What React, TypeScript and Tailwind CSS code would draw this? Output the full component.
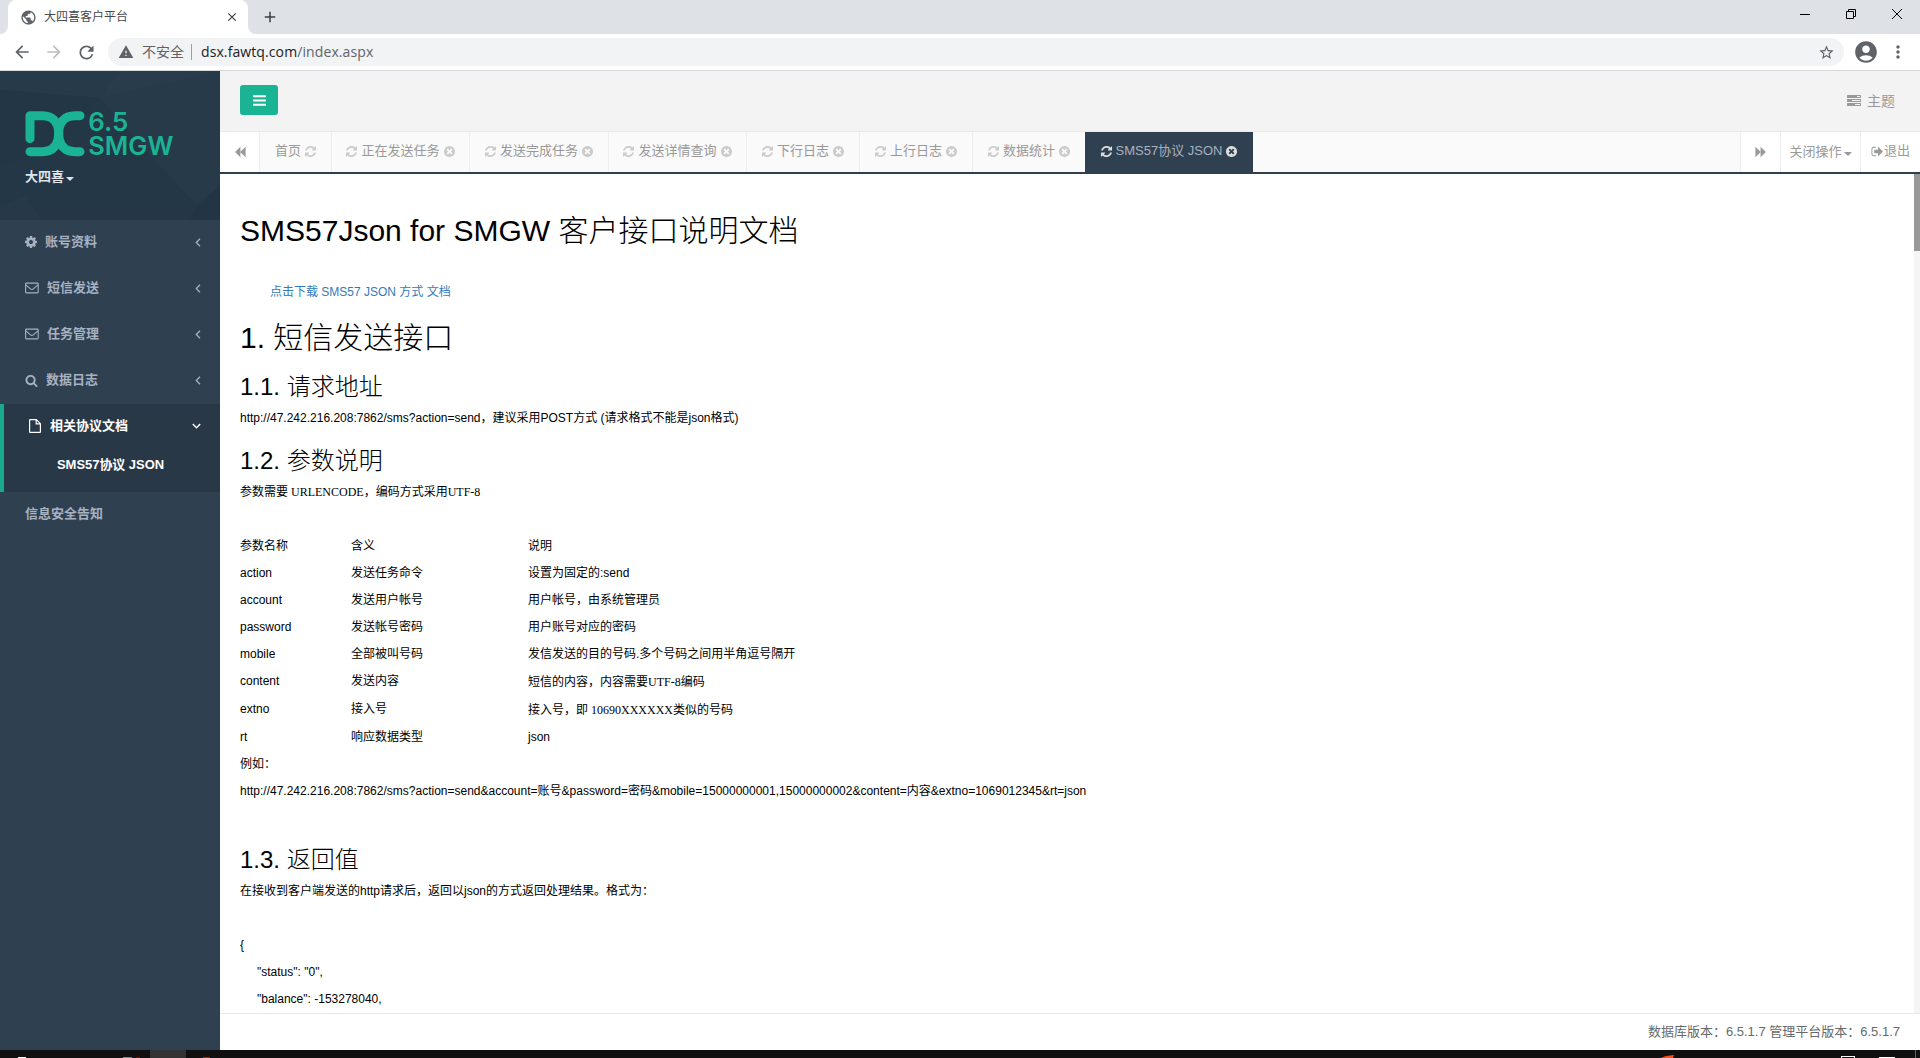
import React from "react";
import { MdPublic, MdStarBorder, MdAccountCircle, MdWarning, MdArrowBack, MdArrowForward, MdRefresh, MdMoreVert, MdClose, MdAdd } from "react-icons/md";

const UI = "font-['Open_Sans','Noto_Sans_CJK_SC',sans-serif]";
const SANS = "font-['Liberation_Sans','Noto_Sans_CJK_SC',sans-serif]";

const PATHS = {
  bars: "M1664 1344v128q0 26-19 45t-45 19h-1408q-26 0-45-19t-19-45v-128q0-26 19-45t45-19h1408q26 0 45 19t19 45zm0-512v128q0 26-19 45t-45 19h-1408q-26 0-45-19t-19-45v-128q0-26 19-45t45-19h1408q26 0 45 19t19 45zm0-512v128q0 26-19 45t-45 19h-1408q-26 0-45-19t-19-45v-128q0-26 19-45t45-19h1408q26 0 45 19t19 45z",
  refresh: "M1639 1056q0 5-1 7-64 268-268 434.5t-478 166.5q-146 0-282.5-55t-243.5-157l-129 129q-19 19-45 19t-45-19-19-45v-448q0-26 19-45t45-19h448q26 0 45 19t19 45-19 45l-137 137q71 66 161 102t187 36q134 0 250-65t186-179q11-17 53-117 8-23 30-23h192q13 0 22.5 9.5t9.5 22.5zm25-800v448q0 26-19 45t-45 19h-448q-26 0-45-19t-19-45 19-45l138-138q-148-137-349-137-134 0-250 65t-186 179q-11 17-53 117-8 23-30 23h-199q-13 0-22.5-9.5t-9.5-22.5v-7q65-268 270-434.5t480-166.5q146 0 284 55.5t245 156.5l130-129q19-19 45-19t45 19 19 45z",
  timesCircle: "M1277 1122q0-26-19-45l-181-181 181-181q19-19 19-45 0-27-19-46l-90-90q-19-19-46-19-26 0-45 19l-181 181-181-181q-19-19-45-19-27 0-46 19l-90 90q-19 19-19 46 0 26 19 45l181 181-181 181q-19 19-19 45 0 27 19 46l90 90q19 19 46 19 26 0 45-19l181-181 181 181q19 19 45 19 27 0 46-19l90-90q19-19 19-46zm387-226q0 209-103 385.5t-279.5 279.5-385.5 103-385.5-103-279.5-279.5-103-385.5 103-385.5 279.5-279.5 385.5-103 385.5 103 279.5 279.5 103 385.5z",
  backward: "M1683 141q19-19 32-13t13 32v1472q0 26-13 32t-32-13l-710-710q-9-9-13-19v710q0 26-13 32t-32-13l-710-710q-19-19-19-45t19-45l710-710q19-19 32-13t13 32v710q4-10 13-19z",
  signOut: "M704 1440q0 4 1 20t.5 26.5-3 23.5-10 19.5-20.5 6.5h-320q-119 0-203.5-84.5t-84.5-203.5v-704q0-119 84.5-203.5t203.5-84.5h320q13 0 22.5 9.5t9.5 22.5q0 4 1 20t.5 26.5-3 23.5-10 19.5-20.5 6.5h-320q-66 0-113 47t-47 113v704q0 66 47 113t113 47h312l11.5 1 11.5 3 8 5.5 7 9 2 13.5zm928-544q0 26-19 45l-544 544q-19 19-45 19t-45-19-19-45v-288h-448q-26 0-45-19t-19-45v-384q0-26 19-45t45-19h448v-288q0-26 19-45t45-19 45 19l544 544q19 19 19 45z",
  tasks: "M1024 1408h640v-128h-640v128zm-384-512h1024v-128h-1024v128zm640-512h384v-128h-384v128zm512 832v256q0 26-19 45t-45 19h-1664q-26 0-45-19t-19-45v-256q0-26 19-45t45-19h1664q26 0 45 19t19 45zm0-512v256q0 26-19 45t-45 19h-1664q-26 0-45-19t-19-45v-256q0-26 19-45t45-19h1664q26 0 45 19t19 45zm0-512v256q0 26-19 45t-45 19h-1664q-26 0-45-19t-19-45v-256q0-26 19-45t45-19h1664q26 0 45 19t19 45z",
  cog: "M1152 896q0-106-75-181t-181-75-181 75-75 181 75 181 181 75 181-75 75-181zm512-109v222q0 12-8 23t-20 13l-185 28q-19 54-39 91 35 50 107 138 10 12 10 25t-9 23q-27 37-99 108t-94 71q-12 0-26-9l-138-108q-44 23-91 38-16 136-29 186-7 28-36 28h-222q-14 0-24.5-8.5t-11.5-21.5l-28-184q-49-16-90-37l-141 107q-10 9-25 9-14 0-25-11-126-114-165-168-7-10-7-23 0-12 8-23 15-21 51-66.5t54-70.5q-27-50-41-99l-183-27q-13-2-21-12.5t-8-23.5v-222q0-12 8-23t19-13l186-28q14-46 39-92-40-57-107-138-10-12-10-24 0-10 9-23 26-36 98.5-107.5t94.5-71.5q13 0 26 10l138 107q44-23 91-38 16-136 29-186 7-28 36-28h222q14 0 24.5 8.5t11.5 21.5l28 184q49 16 90 37l142-107q9-9 24-9 13 0 25 10 129 119 165 170 7 8 7 22 0 12-8 23-15 21-51 66.5t-54 70.5q26 50 41 98l183 28q13 2 21 12.5t8 23.5z",
  search: "M1216 832q0-185-131.5-316.5t-316.5-131.5-316.5 131.5-131.5 316.5 131.5 316.5 316.5 131.5 316.5-131.5 131.5-316.5zm512 832q0 52-38 90t-90 38q-54 0-90-38l-343-342q-179 124-399 124-143 0-273.5-55.5t-225-150-150-225-55.5-273.5 55.5-273.5 150-225 225-150 273.5-55.5 273.5 55.5 225 150 150 225 55.5 273.5q0 220-124 399l343 343q37 37 37 90z",
};

function Icon({ name, className }: { name: keyof typeof PATHS; className: string }) {
  return (
    <svg viewBox="0 0 1792 1792" className={"shrink-0 fill-current " + className}>
      <path d={PATHS[name]} />
    </svg>
  );
}

function Envelope() {
  return (
    <svg width="14" height="12" viewBox="0 0 14 12" fill="none" stroke="currentColor" strokeWidth="1.1" className="shrink-0">
      <rect x="0.6" y="1.1" width="12.6" height="9.8" rx="0.8" />
      <path d="M0.8 2.8 L5.5 6.9 Q6.9 8 8.3 6.9 L13 2.8" />
    </svg>
  );
}

function FileIcon() {
  return (
    <svg width="12" height="14" viewBox="0 0 12 14" fill="none" stroke="currentColor" strokeWidth="1.2" className="shrink-0">
      <path d="M0.6 1.1 Q0.6 0.6 1.1 0.6 H7.3 L11.4 4.7 V12.9 Q11.4 13.4 10.9 13.4 H1.1 Q0.6 13.4 0.6 12.9 Z M7.2 0.6 V4.9 H11.4" />
    </svg>
  );
}

function Caret({ className = "" }: { className?: string }) {
  return <span className={"inline-block border-x-4 border-t-4 border-x-transparent border-t-current " + className} />;
}

function BrowserChrome() {
  return (
    <header className={"shrink-0 " + UI}>
      <div className="flex h-[34px] bg-[#dee1e6]">
        <div className="w-2 bg-white">
          <div className="h-full rounded-br-lg bg-[#dee1e6]" />
        </div>
        <div className="flex w-[240px] items-center rounded-t-lg bg-white pr-[9px] pl-3">
          <MdPublic className="size-[17px] text-[#5f6368]" />
          <span className="ml-[7px] flex-1 text-xs text-[#45494d]">大四喜客户平台</span>
          <MdClose className="size-[14px] text-[#3c4043]" />
        </div>
        <div className="w-2 bg-white">
          <div className="h-full rounded-bl-lg bg-[#dee1e6]" />
        </div>
        <MdAdd className="mt-[8px] ml-[5px] size-[18px] text-[#3c4043]" />
        <svg viewBox="0 0 120 20" className="mt-1 mr-[16px] ml-auto h-5 w-[120px]" fill="none" stroke="#000" strokeWidth="1">
          <path d="M16 10.5 H26" />
          <path d="M62.5 7.5 h7 v7 h-7 z M64.5 7.5 v-2 h7 v7 h-2" />
          <path d="M108 5 l10 10 M118 5 l-10 10" />
        </svg>
      </div>
      <div className="flex h-9 items-center bg-white text-[#5f6368]">
        <MdArrowBack className="ml-3 size-5" />
        <MdArrowForward className="ml-3 size-5 text-[#bbbdbf]" />
        <MdRefresh className="ml-3 size-[21px]" />
        <div className="ml-[11px] flex h-7 flex-1 items-center rounded-full bg-[#f1f3f4] pr-[9px] pl-[10px] text-sm">
          <MdWarning className="size-4" />
          <span className="ml-2 w-[43px] text-[14px] whitespace-nowrap">不安全</span>
          <span className="ml-[6px] h-4 w-px bg-[#9aa0a6]" />
          <span className="ml-[9px] tracking-[0.1px]">
            <span className="text-[#202124]">dsx.fawtq.com</span>/index.aspx
          </span>
          <MdStarBorder className="ml-auto size-[17px]" />
        </div>
        <MdAccountCircle className="ml-[9px] size-[26px]" />
        <MdMoreVert className="mr-[12px] ml-[9px] size-5" />
      </div>
      <div className="h-px bg-[#d6d8db]" />
    </header>
  );
}

function Logo() {
  return (
    <svg width="150" height="50" viewBox="0 0 450 150" overflow="visible" className="block text-[#1ab394]">
      <g fill="none" stroke="currentColor" strokeWidth="27" strokeLinecap="round" strokeLinejoin="round">
        <path d="M15 92 V23 H52 C84 23 101 44 101 76 C101 110 84 131 52 131 H15" />
        <path d="M165 23 H150 C118 23 101 44 101 76 C101 110 118 131 150 131 H165" />
      </g>
      <g fill="currentColor" className="font-['Inter',sans-serif]" fontWeight="600" fontSize="75">
        <text x="190" y="68" textLength="120" lengthAdjust="spacingAndGlyphs">6.5</text>
        <text x="190" y="142" textLength="255" lengthAdjust="spacingAndGlyphs">SMGW</text>
      </g>
    </svg>
  );
}

function ProfileBackground() {
  return (
    <svg viewBox="0 0 220 149" className="absolute inset-0 h-full w-full" preserveAspectRatio="none">
      <rect width="220" height="149" fill="#243747" />
      <path d="M0 0 H120 L100 27 L0 19 Z" fill="#273a4a" />
      <path d="M120 0 H220 V115 L197 134 L155 90 L100 27 Z" fill="#263a4a" />
      <path d="M120 0 L220 0 L100 27 Z" fill="#283c4b" />
      <path d="M0 19 L100 27 L60 75 L0 95 Z" fill="#233646" />
      <path d="M197 134 L220 115 V149 H190 Z" fill="#223544" />
      <path d="M0 135 L25 125 L42 149 H0 Z" fill="#253948" />
    </svg>
  );
}

const MENU = [
  { label: "账号资料", icon: <Icon name="cog" className="mr-[7px] -ml-px size-[14px]" /> },
  { label: "短信发送", icon: <span className="mr-2"><Envelope /></span> },
  { label: "任务管理", icon: <span className="mr-2"><Envelope /></span> },
  { label: "数据日志", icon: <Icon name="search" className="mr-2 size-[13px]" /> },
];

function Sidebar() {
  return (
    <nav className={"w-[220px] shrink-0 bg-[#2f4050] text-[13px] font-semibold text-[#a7b1c2] " + SANS}>
      <div className="relative h-[149px]">
        <ProfileBackground />
        <div className="relative pt-[37px] pl-[25px]">
          <Logo />
          <div className="mt-[7px] flex h-6 items-center text-[#dfe4ed]">
            大四喜
            <Caret className="mt-[3px] ml-[2px]" />
          </div>
        </div>
      </div>
      {MENU.map((m) => (
        <div key={m.label} className="flex h-[46px] items-center pr-[19px] pb-[2px] pl-[25px]">
          {m.icon}
          <span className="flex-1">{m.label}</span>
          <svg width="6" height="9" viewBox="0 0 6 9" fill="none" stroke="currentColor" strokeWidth="1.3">
            <path d="M5 0.8 L1.3 4.5 L5 8.2" />
          </svg>
        </div>
      ))}
      <div className="h-[88px] border-l-4 border-[#19aa8d] bg-[#293846] text-white">
        <div className="flex h-[44px] items-center pr-[19px] pl-[25px]">
          <FileIcon />
          <span className="ml-[9px] flex-1">相关协议文档</span>
          <svg width="9" height="6" viewBox="0 0 9 6" fill="none" stroke="currentColor" strokeWidth="1.5">
            <path d="M0.8 1 L4.5 4.7 L8.2 1" />
          </svg>
        </div>
        <div className="flex h-[34px] items-center pl-[53px] tracking-[-0.05px]">SMS57协议 JSON</div>
      </div>
      <div className="flex h-[44px] items-center pl-[25px]">信息安全告知</div>
    </nav>
  );
}

const TABS = [
  { label: "正在发送任务", w: "w-[138px]" },
  { label: "发送完成任务", w: "w-[139px]" },
  { label: "发送详情查询", w: "w-[138px]" },
  { label: "下行日志", w: "w-[113px]" },
  { label: "上行日志", w: "w-[113px]" },
  { label: "数据统计", w: "w-[113px]" },
];

function TabBar() {
  return (
    <div className={"flex h-[42px] shrink-0 border-b-2 border-[#2f4050] bg-[#fafafa] text-[13px] whitespace-nowrap text-[#999] " + SANS}>
      <div className="flex w-[40px] items-center justify-center border-r border-[#eee] bg-white">
        <Icon name="backward" className="size-[12px]" />
      </div>
      <div className="flex w-[72px] items-center gap-[3px] border-r border-[#eee] pb-[2px] pl-[15px]">
        首页
        <Icon name="refresh" className="size-[13px] text-[#ccc]" />
      </div>
      {TABS.map((t) => (
        <div key={t.label} className={"flex items-center justify-center gap-[3px] border-r border-[#eee] pb-[2px] " + t.w}>
          <Icon name="refresh" className="size-[13px] text-[#ccc]" />
          {t.label}
          <Icon name="timesCircle" className="size-[13px] text-[#ccc]" />
        </div>
      ))}
      <div className="-ml-px flex w-[168px] items-center justify-center gap-[3px] bg-[#2f4050] pb-[2px] text-[#a7b1c2]">
        <Icon name="refresh" className="size-[13px] text-[#ddd]" />
        SMS57协议 JSON
        <Icon name="timesCircle" className="size-[13px] text-[#ddd]" />
      </div>
      <div className="ml-auto flex w-[41px] items-center justify-center border-x border-[#eee] bg-white">
        <Icon name="backward" className="size-[12px] rotate-180" />
      </div>
      <div className="flex w-[80px] items-center justify-center border-r border-[#eee] bg-white">
        关闭操作
        <Caret className="mt-[3px] ml-[2px]" />
      </div>
      <div className="flex w-[59px] items-center bg-white pb-[2px] pl-[10px]">
        <Icon name="signOut" className="size-[13px]" />
        退出
      </div>
    </div>
  );
}

const PARAMS = [
  ["参数名称", "含义", "说明"],
  ["action", "发送任务命令", "设置为固定的:send"],
  ["account", "发送用户帐号", "用户帐号，由系统管理员"],
  ["password", "发送帐号密码", "用户账号对应的密码"],
  ["mobile", "全部被叫号码", "发信发送的目的号码.多个号码之间用半角逗号隔开"],
  ["content", "发送内容", "短信的内容，内容需要UTF-8编码"],
  ["extno", "接入号", "接入号，即 10690XXXXXX类似的号码"],
  ["rt", "响应数据类型", "json"],
];

function Document() {
  const serif = "font-['Liberation_Serif','Noto_Sans_CJK_SC',serif]";
  return (
    <div className={"flex min-h-0 flex-1 overflow-hidden bg-white text-xs whitespace-nowrap text-black " + SANS}>
      <main className="flex-1 overflow-hidden pl-5">
        <h1 className="mt-[37px] flex h-10 items-center text-[30px] font-light whitespace-pre">SMS57Json for SMGW 客户接口说明文档</h1>
        <a className="mt-[27px] ml-[30px] flex h-[27px] items-center text-[#337ab7]">点击下载 SMS57 JSON 方式 文档</a>
        <h2 className="mt-[13px] flex h-10 items-center text-[30px] font-light">1. 短信发送接口</h2>
        <h3 className="mt-[13px] flex h-8 items-center text-2xl font-light">1.1. 请求地址</h3>
        <p className="mt-[1px] flex h-[27px] items-center">http://47.242.216.208:7862/sms?action=send，建议采用POST方式 (请求格式不能是json格式)</p>
        <h3 className="mt-[14px] flex h-8 items-center text-2xl font-light">1.2. 参数说明</h3>
        <p className={"mt-[1px] flex h-[27px] items-center " + serif}>参数需要 URLENCODE，编码方式采用UTF-8</p>
        <div className="mt-[27px]">
          {PARAMS.map(([name, meaning, note], i) => (
            <div key={name} className={"grid grid-cols-[111px_177px_1fr] items-center " + (i === 5 || i === 6 ? "h-7" : "h-[27px]")}>
              <span>{name}</span>
              <span>{meaning}</span>
              <span className={i === 5 || i === 6 ? "pt-[2px] " + serif : ""}>{note}</span>
            </div>
          ))}
        </div>
        <p className="flex h-[27px] items-center">例如：</p>
        <p className="flex h-[27px] items-center">
          http://47.242.216.208:7862/sms?action=send&amp;account=账号&amp;password=密码&amp;mobile=15000000001,15000000002&amp;content=内容&amp;extno=1069012345&amp;rt=json
        </p>
        <h3 className="mt-[40px] flex h-8 items-center text-2xl font-light">1.3. 返回值</h3>
        <p className="mt-[1px] flex h-[27px] items-center">在接收到客户端发送的http请求后，返回以json的方式返回处理结果。格式为：</p>
        <p className="mt-[27px] flex h-[27px] items-center">{"{"}</p>
        <p className="flex h-[27px] items-center pl-[17px]">"status": "0",</p>
        <p className="flex h-[27px] items-center pl-[17px]">"balance": -153278040,</p>
      </main>
      <div className="w-[6px] shrink-0 bg-[#f5f5f5]">
        <div className="h-[77px] bg-[#999]" />
      </div>
    </div>
  );
}

function Taskbar() {
  return (
    <div className="flex h-2 shrink-0 items-end bg-[#101010]">
      <div className="ml-[18px] h-px w-2 bg-white" />
      <div className="ml-[97px] h-px w-[9px] bg-[#888]" />
      <div className="ml-[4px] h-px w-1 bg-[#7a1010]" />
      <div className="ml-[10px] h-2 w-9 bg-[#333]" />
      <div className="ml-[17px] h-px w-[7px] bg-[#8a3a10]" />
      <svg width="14" height="3" viewBox="0 0 14 3" className="ml-auto">
        <path d="M0 3 L5 1 L13 0 L12 3 Z" fill="#f4511e" />
      </svg>
      <div className="ml-[166px] h-[2px] w-[14px] border border-b-0 border-white" />
      <div className="ml-[24px] h-px w-4 bg-white" />
      <div className="mr-[4px] ml-[20px] h-2 w-px bg-[#666]" />
    </div>
  );
}

export default function App() {
  return (
    <div className="flex h-[1058px] w-[1920px] flex-col overflow-hidden bg-white">
      <BrowserChrome />
      <div className="flex min-h-0 flex-1">
        <Sidebar />
        <div className="flex min-w-0 flex-1 flex-col">
          <div className={"flex h-[61px] shrink-0 items-center border-b border-[#e7eaec] bg-[#f3f3f4] pr-[25px] pl-5 text-sm text-[#999] " + SANS}>
            <button className="mb-[2px] flex h-[30px] w-[38px] items-center justify-center rounded-[3px] bg-[#1ab394] text-white">
              <Icon name="bars" className="size-[15px]" />
            </button>
            <Icon name="tasks" className="ml-auto size-[14px]" />
            <span className="ml-[6px]">主题</span>
          </div>
          <TabBar />
          <Document />
          <footer className={"flex h-[37px] shrink-0 items-center justify-end border-t border-[#e7eaec] bg-white pr-5 text-[13px] text-[#676a6c] " + SANS}>
            数据库版本：6.5.1.7 管理平台版本：6.5.1.7
          </footer>
        </div>
      </div>
      <Taskbar />
    </div>
  );
}
